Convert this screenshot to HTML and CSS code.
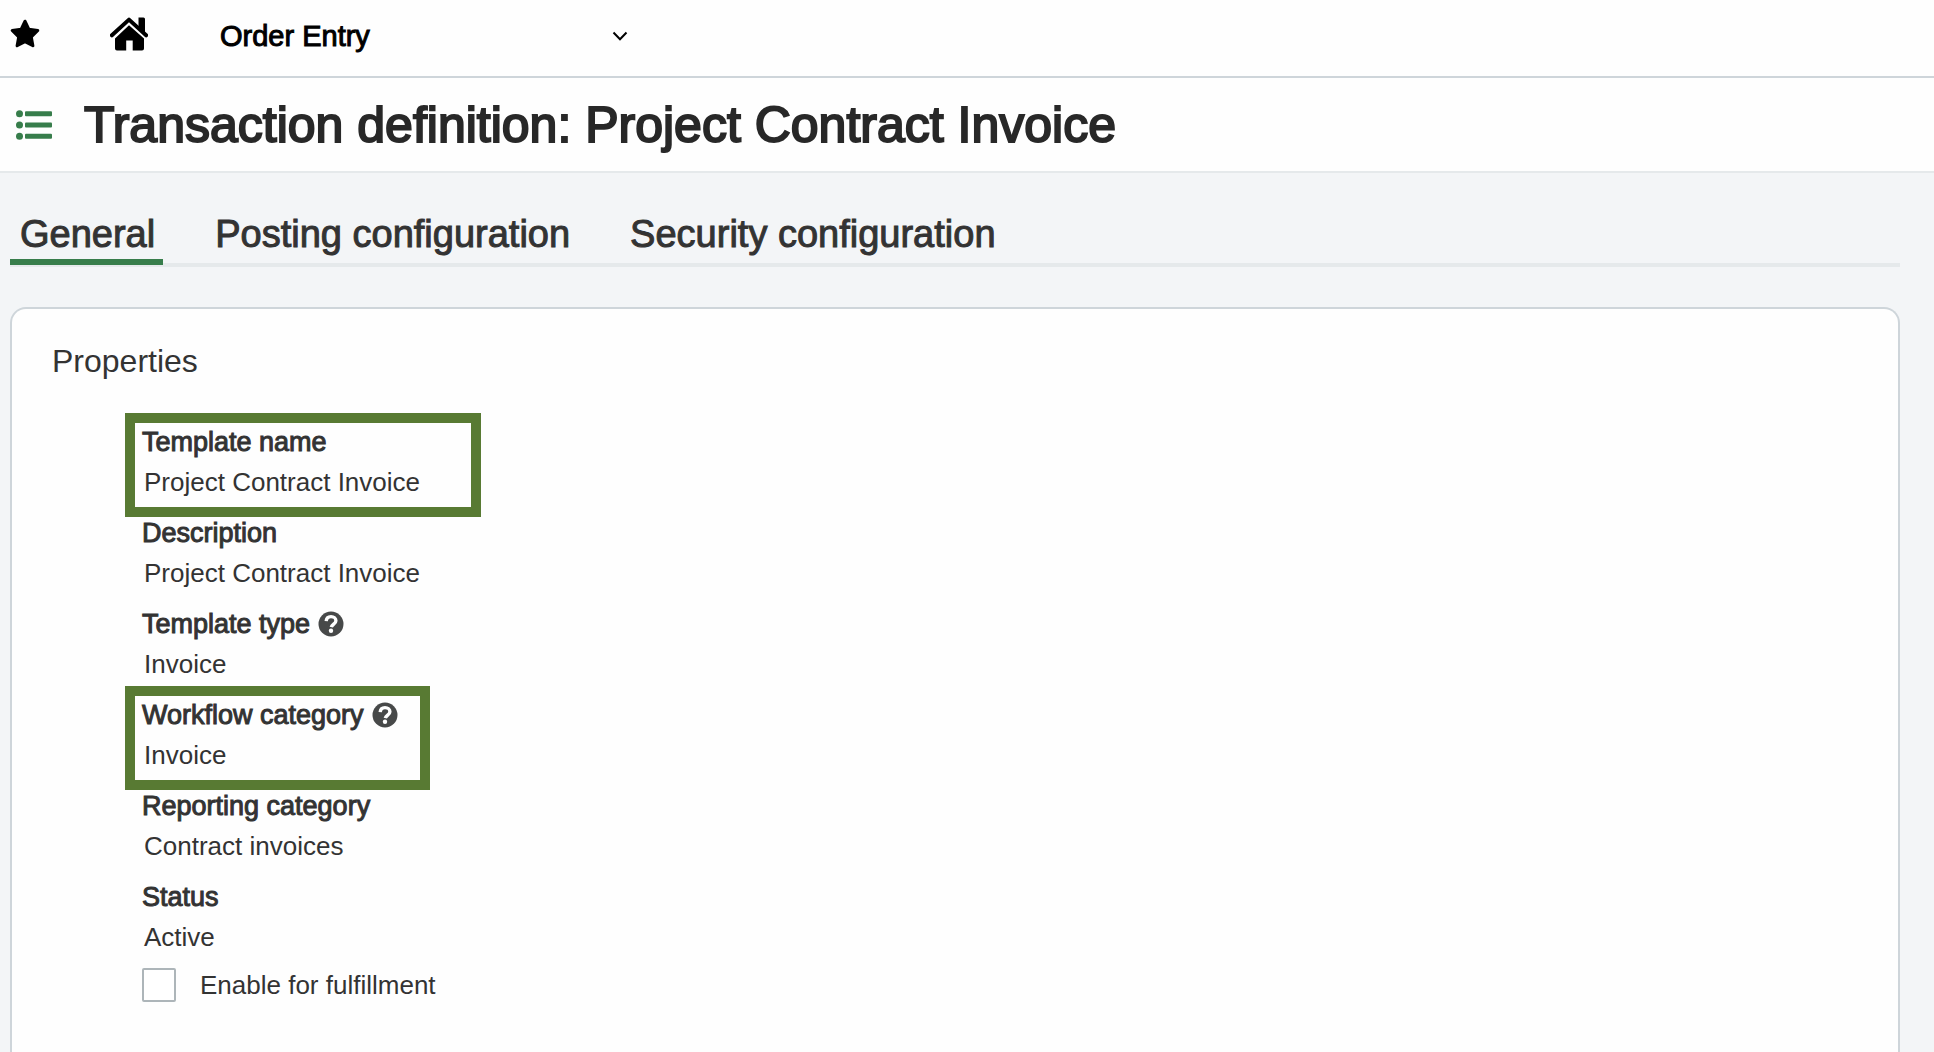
FILE: index.html
```html
<!DOCTYPE html>
<html lang="en">
<head>
<meta charset="utf-8">
<meta name="viewport" content="width=device-width, initial-scale=1">
<title>Transaction definition: Project Contract Invoice</title>
<link rel="stylesheet" href="styles.css">
</head>
<body>
<svg class="sprite" aria-hidden="true">
  <symbol id="help" viewBox="0 0 26 26">
    <circle cx="13" cy="13" r="12.5" fill="#474949"/>
    <path d="M8.2 10.2C8.4 7 10.2 5.6 13 5.6C15.9 5.6 17.9 7.2 17.9 9.7C17.9 12.9 14 13.1 13.3 16.2" fill="none" stroke="#fff" stroke-width="3.4"/>
    <circle cx="13" cy="19.8" r="2.2" fill="#fff"/>
  </symbol>
</svg>
<header class="topbar">
  <button class="icon-button star" type="button" aria-label="Favorites">
    <svg width="30" height="30" viewBox="0 0 30 30"><path d="M15 2.2L18.8 10.2L27.8 11.5L21.3 17.9L22.9 26.8L15 22.6L7.1 26.8L8.7 17.9L2.2 11.5L11.2 10.2Z" stroke="#000" stroke-width="3" stroke-linejoin="round"/></svg>
  </button>
  <button class="icon-button home" type="button" aria-label="Home">
    <svg width="38" height="34" viewBox="0 0 38 34">
      <path d="M1.9 18.3L19 2.6L36.1 18.3" fill="none" stroke="#000" stroke-width="4" stroke-linecap="round" stroke-linejoin="round"/>
      <path d="M28.5 0.5h5q1.5 0 1.5 1.5v15l-6.5-6z"/>
      <path d="M19 8.2L34 21.5V31.5q0 2-2 2h-9.3v-10h-6.5v10H7q-2 0-2-2V21.5z"/>
    </svg>
  </button>
  <div class="app-select">
    <select aria-label="Application"><option>Order Entry</option></select>
    <svg width="16" height="10" viewBox="0 0 16 10"><path d="M1.5 1.5L8 8.3L14.5 1.5" fill="none" stroke="#000" stroke-width="2"/></svg>
  </div>
</header>
<div class="titlebar">
  <button class="icon-button list" type="button" aria-label="Show list">
    <svg width="36" height="30" viewBox="0 0 36 30" fill="#377d4b">
      <circle cx="3.5" cy="3.7" r="3.5"/><circle cx="3.5" cy="15" r="3.5"/><circle cx="3.5" cy="26.3" r="3.5"/>
      <rect x="9" y="1.2" width="27" height="5" rx="1"/><rect x="9" y="12.5" width="27" height="5" rx="1"/><rect x="9" y="23.8" width="27" height="5" rx="1"/>
    </svg>
  </button>
  <h1>Transaction definition: Project Contract Invoice</h1>
</div>
<main class="content">
  <nav class="tabs" role="tablist">
    <button class="tab active" role="tab" aria-selected="true" type="button">General</button>
    <button class="tab" role="tab" aria-selected="false" type="button">Posting configuration</button>
    <button class="tab" role="tab" aria-selected="false" type="button">Security configuration</button>
  </nav>
  <section class="card">
    <h2>Properties</h2>
    <dl class="fields">
      <div class="field marked marked-wide"><dt>Template name</dt><dd>Project Contract Invoice</dd></div>
      <div class="field"><dt>Description</dt><dd>Project Contract Invoice</dd></div>
      <div class="field"><dt>Template type<button class="icon-button help" type="button" aria-label="Help: Template type"><svg width="26" height="26"><use href="#help"/></svg></button></dt><dd>Invoice</dd></div>
      <div class="field marked"><dt>Workflow category<button class="icon-button help" type="button" aria-label="Help: Workflow category"><svg width="26" height="26"><use href="#help"/></svg></button></dt><dd>Invoice</dd></div>
      <div class="field"><dt>Reporting category</dt><dd>Contract invoices</dd></div>
      <div class="field"><dt>Status</dt><dd>Active</dd></div>
    </dl>
    <label class="check" for="fulfillment"><input id="fulfillment" type="checkbox">Enable for fulfillment</label>
  </section>
</main>
</body>
</html>
```
FILE: styles.css
```css
* { box-sizing: border-box; }
body {
  margin: 0;
  min-height: 100vh;
  display: flex;
  flex-direction: column;
  background: #f3f5f7;
  color: #333;
  font-family: "Liberation Sans", Arial, sans-serif;
  font-size: 26px;
  line-height: 40px;
}
h1, h2, dl, dd { margin: 0; font-weight: 400; }
svg { display: block; }
.sprite { position: absolute; width: 0; height: 0; }
.icon-button { padding: 0; border: 0; background: none; flex: none; }

.topbar {
  display: flex;
  align-items: center;
  height: 78px;
  padding: 0 10px 8px;
  background: #fefefe;
  border-bottom: 2px solid #ced5da;
}
.home { margin-left: 70px; }
.app-select { display: flex; align-items: center; margin-left: 72px; width: 408px; padding-top: 4px; }
.app-select select {
  flex: 1;
  appearance: none;
  padding: 0;
  border: 0;
  background: none;
  color: #000;
  font: inherit;
  font-size: 29px;
  line-height: 40px;
  -webkit-text-stroke: 1px #000;
}

.titlebar {
  display: flex;
  align-items: center;
  gap: 32px;
  height: 95px;
  padding: 0 16px;
  background: #fefefe;
  border-bottom: 2px solid #e5e9eb;
}
h1 { color: #282828; font-size: 50px; line-height: 60px; -webkit-text-stroke: 2px #282828; }

.content { flex: 1; display: flex; flex-direction: column; padding: 36px 34px 0 10px; }
.tabs { display: flex; gap: 42px; border-bottom: 4px solid #e5e9eb; }
.tab {
  height: 56px;
  margin-bottom: -2px;
  padding: 0 8px 0 10px;
  border: 0;
  border-bottom: 6px solid transparent;
  background: none;
  color: #333;
  font: inherit;
  font-size: 38px;
  line-height: 50px;
  -webkit-text-stroke: 1px #333;
}
.tab.active { border-bottom-color: #377d4b; }

.card {
  flex: 1;
  margin-top: 40px;
  padding: 32px 40px 48px;
  border: 2px solid #ced5da;
  border-bottom: 0;
  border-radius: 16px 16px 0 0;
  background: #fefefe;
}
h2 { font-size: 32px; }
.fields { display: grid; gap: 11px; margin: 41px 0 11px 90px; justify-items: start; }
.field { position: relative; }
dt { display: flex; align-items: center; gap: 8px; font-size: 27px; -webkit-text-stroke: 1px #333; }
dd { padding-left: 2px; }
.marked::after {
  content: "";
  position: absolute;
  inset: -9px -32px -15px -17px;
  border: 10px solid #587a33;
  pointer-events: none;
}
.marked-wide::after { right: -61px; }

.check { display: flex; align-items: center; gap: 24px; height: 34px; margin-left: 90px; }
.check input {
  appearance: none;
  width: 34px;
  height: 34px;
  margin: 0;
  border: 2px solid #adb5b9;
  border-radius: 2px;
  background: #fff;
}
```
